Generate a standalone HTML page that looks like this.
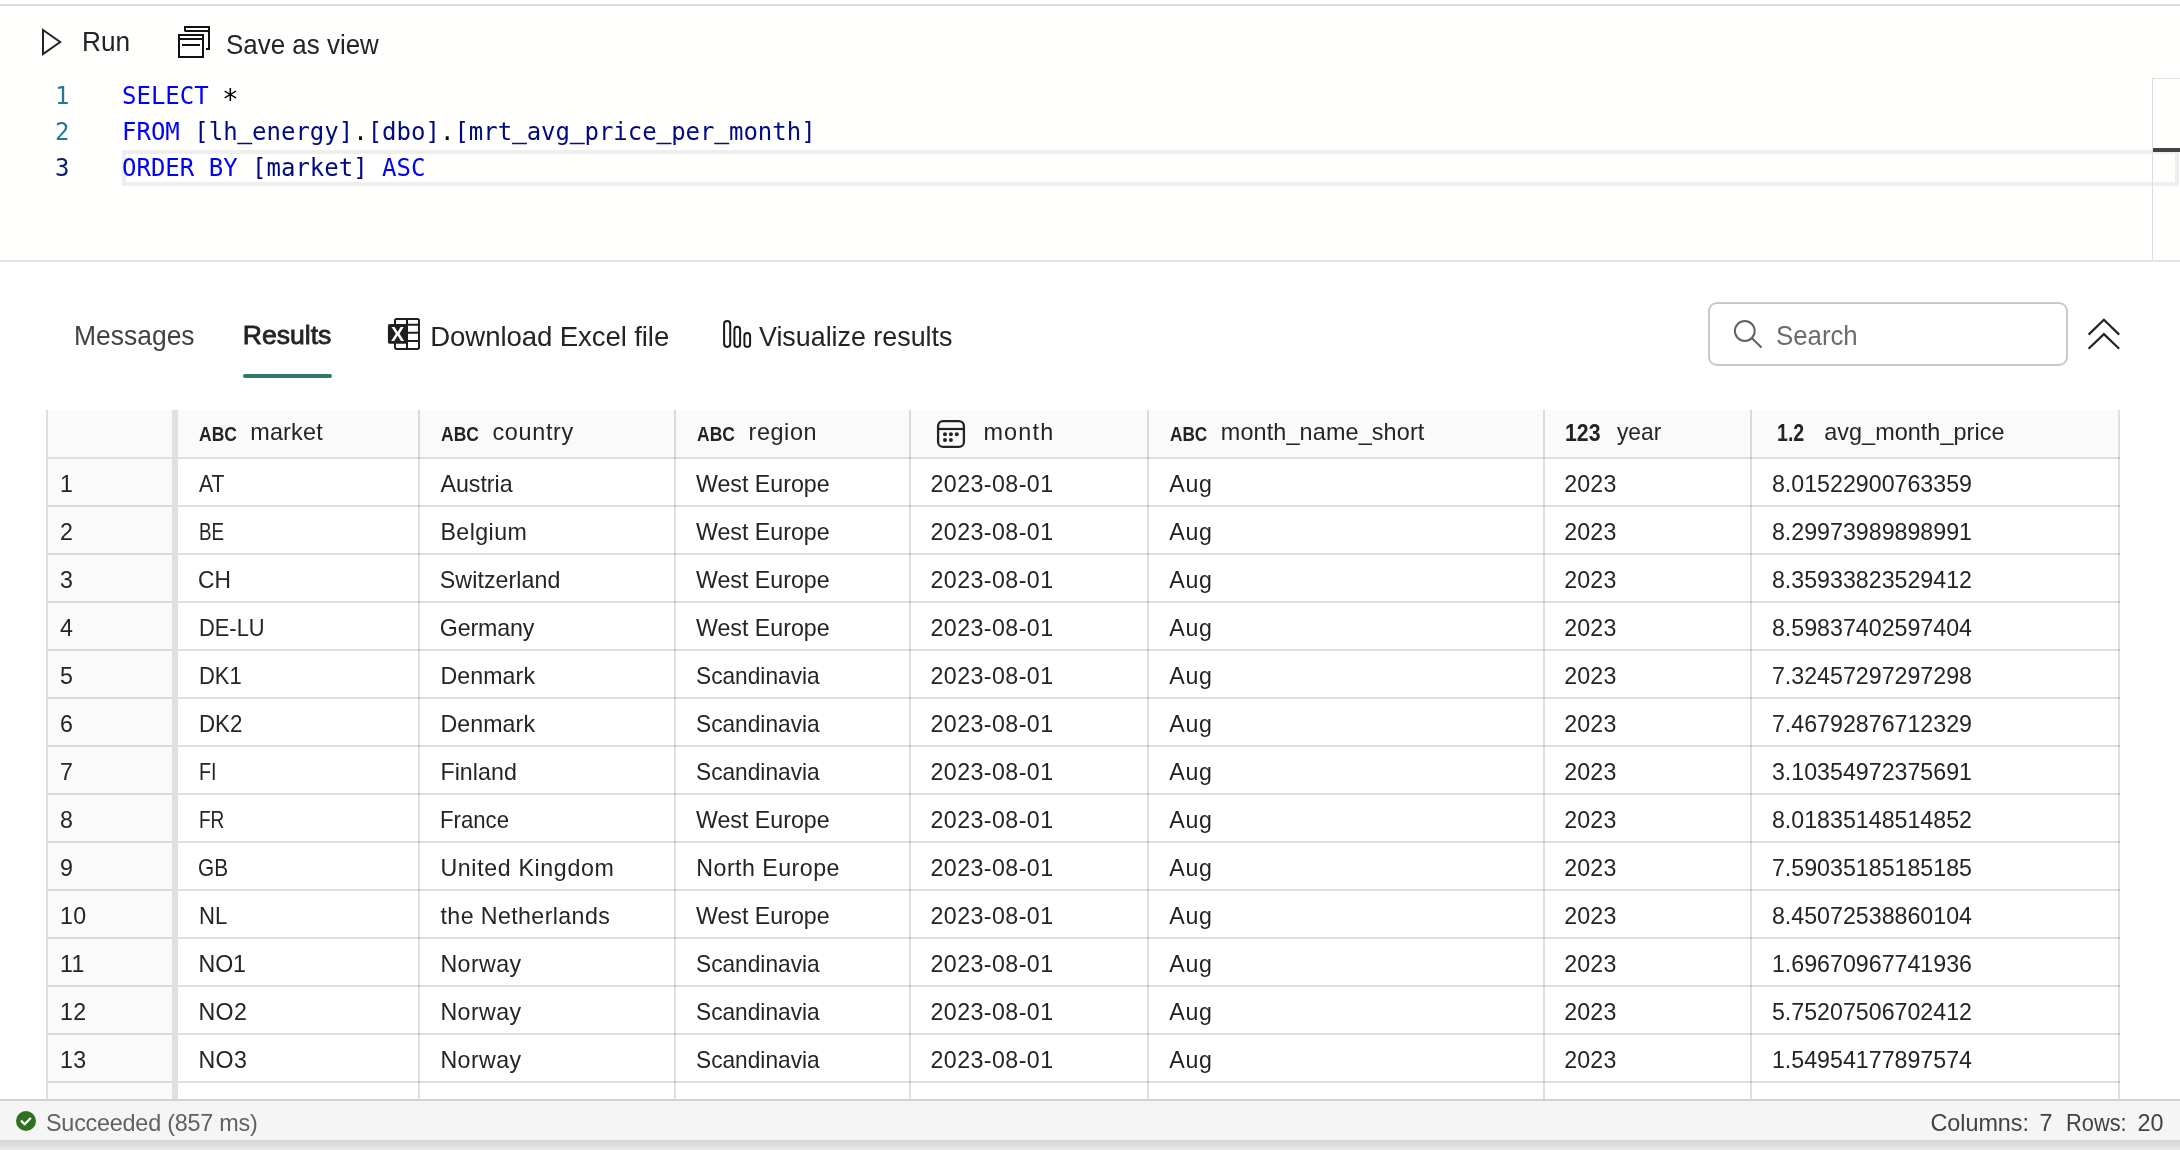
<!DOCTYPE html>
<html lang="en">
<head>
<meta charset="utf-8">
<title>SQL query results</title>
<style>
html,body{margin:0;padding:0}
body{width:2180px;height:1150px;overflow:hidden;background:#fff;position:relative;font-family:"Liberation Sans",sans-serif;color:#242424}
.abs{position:absolute}
.t{position:absolute;white-space:pre;line-height:1;transform-origin:0 50%;font-family:"Liberation Sans",sans-serif}
.code,.ln{position:absolute;white-space:pre;line-height:1;font-family:"DejaVu Sans Mono","Liberation Mono",monospace;font-size:24px}
.code{left:122px}
.u{display:inline-block;transform:translateY(-2.5px);-webkit-text-stroke:0.5px currentColor}
.ast{display:inline-block;color:#000;transform:translateY(4px) scale(1.15)}
.ln{left:40px;width:29.5px;text-align:right}
#topline{left:0;top:4px;width:2180px;height:2px;background:#dcdcdc}
#editor{left:0;top:6px;width:2180px;height:254px;background:#fffffe}
#edsep{left:0;top:260px;width:2180px;height:2px;background:#e4e4e4}
#curline{left:122px;top:150px;width:2049px;height:28px;border:4px solid #eeeeee}
#ruler{left:2152px;top:78px;width:28px;height:182px;border-left:1px solid #dddddd;border-top:1px solid #e2e2e2;box-sizing:border-box}
#rulermark{left:2153px;top:148px;width:27px;height:4px;background:#444444}
#tabline{left:243px;top:374px;width:89px;height:4px;border-radius:2px;background:#2f7a6a}
#search{left:1708px;top:302px;width:360px;height:64px;box-sizing:border-box;border:2px solid #c9c9c9;border-radius:9px;background:#fff}
/* table */
#thead{left:48px;top:410px;width:2070px;height:47px;background:#fafafa}
#rownum{left:48px;top:459px;width:124px;height:641px;background:#fafafa}
.hl{position:absolute;left:46px;width:2074px;height:2px;background:rgba(0,0,0,.125)}
.vl{position:absolute;top:410px;width:2px;height:690px;background:rgba(0,0,0,.125)}
#divider{left:172px;top:410px;width:6px;height:690px;background:#e0e0e0}
#clip{left:0;top:0;width:2180px;height:1150px;will-change:transform}
#st{left:0;top:0;width:2180px;height:1150px;will-change:transform}
/* status */
#status{left:0;top:1099px;width:2180px;height:41px;background:#f5f5f5;border-top:2px solid #d1d1d1;box-sizing:border-box}
#shadow{left:0;top:1140px;width:2180px;height:10px;background:linear-gradient(#d4d4d4,#e9e9e9)}
</style>
</head>
<body>
<div class="abs" id="clip">
<div class="abs" id="topline"></div>
<div class="abs" id="editor"></div>
<div class="abs" id="edsep"></div>
<div class="abs" id="curline"></div>
<div class="abs" id="ruler"></div>
<div class="abs" id="rulermark"></div>

<!-- toolbar icons -->
<svg class="abs" style="left:40px;top:26px" width="24" height="32" viewBox="0 0 24 32"><path d="M3 4 L20.2 16 L3 28 Z" fill="none" stroke="#242424" stroke-width="2" stroke-linejoin="miter"/></svg>
<svg class="abs" style="left:176px;top:24px" width="36" height="36" viewBox="0 0 36 36" fill="none" stroke="#111" stroke-width="2"><path d="M9 7.5 V3 H33 V25 H30"/><path d="M9 7 H33" stroke-width="2"/><rect x="3" y="11" width="24" height="22"/><path d="M3 15 H27"/><path d="M6 21 H24"/></svg>

<!-- results toolbar icons -->
<div class="abs" id="tabline"></div>
<div class="abs" id="search"></div>

<!-- table -->
<div class="abs" id="thead"></div>
<div class="abs" id="rownum"></div>
<div class="hl" style="top:457px"></div>
<div class="hl" style="top:505px"></div>
<div class="hl" style="top:553px"></div>
<div class="hl" style="top:601px"></div>
<div class="hl" style="top:649px"></div>
<div class="hl" style="top:697px"></div>
<div class="hl" style="top:745px"></div>
<div class="hl" style="top:793px"></div>
<div class="hl" style="top:841px"></div>
<div class="hl" style="top:889px"></div>
<div class="hl" style="top:937px"></div>
<div class="hl" style="top:985px"></div>
<div class="hl" style="top:1033px"></div>
<div class="hl" style="top:1081px"></div>
<div class="vl" style="left:418px"></div>
<div class="vl" style="left:674px"></div>
<div class="vl" style="left:909px"></div>
<div class="vl" style="left:1147px"></div>
<div class="vl" style="left:1543px"></div>
<div class="vl" style="left:1750px"></div>
<div class="vl" style="left:2118px"></div>
<div class="vl" style="left:46px;background:#dfdfdf"></div>
<div class="abs" id="divider"></div>
<!-- excel icon -->
<svg class="abs" style="left:386px;top:316px" width="36" height="36" viewBox="0 0 36 36"><g fill="none" stroke="#1f1f1f" stroke-width="2"><rect x="9" y="2.9" width="24" height="30" rx="1.6"/><path d="M21 2.9V32.9M21 8.7H33M21 16.8H33M21 25H33"/></g><rect x="1.9" y="8" width="19.4" height="19.8" rx="1.8" fill="#1f1f1f"/><text x="11.65" y="25.05" font-family="Liberation Sans, sans-serif" font-weight="700" font-size="19.8" fill="#ffffff" text-anchor="middle">X</text></svg>
<!-- visualize icon -->
<svg class="abs" style="left:722px;top:318px" width="32" height="32" viewBox="0 0 32 32" fill="none" stroke="#1a1a1a" stroke-width="2"><rect x="2.1" y="2.9" width="6.1" height="26" rx="3.05"/><rect x="12.4" y="8.7" width="5.7" height="20.2" rx="2.85"/><rect x="22.4" y="15.1" width="5.7" height="13.8" rx="2.85"/></svg>
<!-- search icon -->
<svg class="abs" style="left:1730px;top:316px" width="36" height="36" viewBox="0 0 36 36" fill="none" stroke="#616161" stroke-width="2" stroke-linecap="round"><circle cx="14.8" cy="15" r="9.9"/><path d="M22 22.3L31 31"/></svg>
<!-- collapse chevrons -->
<svg class="abs" style="left:2084px;top:313.4px" width="40" height="40" viewBox="0 0 40 40" fill="none" stroke="#242424" stroke-width="2.2"><path d="M4.6 21.6L19.9 6.8L35.2 21.6"/><path d="M4.6 35.8L19.9 21.1L35.2 35.8"/></svg>
<!-- calendar icon -->
<svg class="abs" style="left:935px;top:418px" width="32" height="32" viewBox="0 0 32 32"><rect x="3.1" y="3.1" width="25.8" height="25.8" rx="5" fill="none" stroke="#242424" stroke-width="2.3"/><path d="M3 11H29" stroke="#242424" stroke-width="2.2"/><g fill="#242424"><circle cx="10" cy="16.2" r="2"/><circle cx="15.9" cy="16.2" r="2"/><circle cx="21.8" cy="16.2" r="2"/><circle cx="10" cy="22.1" r="2"/><circle cx="15.9" cy="22.1" r="2"/></g></svg>

<div class="code" style="top:84.00px"><span style="color:#0000ff">SELECT</span><span style="color:#000000"> </span><span class="ast">*</span></div>
<div class="ln" style="top:84.00px;color:#237893">1</div>
<div class="code" style="top:120.00px"><span style="color:#0000ff">FROM</span><span style="color:#000000"> </span><span style="color:#000a80">[lh<span class="u">_</span>energy]</span><span style="color:#000000">.</span><span style="color:#000a80">[dbo]</span><span style="color:#000000">.</span><span style="color:#000a80">[mrt<span class="u">_</span>avg<span class="u">_</span>price<span class="u">_</span>per<span class="u">_</span>month]</span></div>
<div class="ln" style="top:120.00px;color:#237893">2</div>
<div class="code" style="top:156.00px"><span style="color:#0000ff">ORDER</span><span style="color:#000000"> </span><span style="color:#0000ff">BY</span><span style="color:#000000"> </span><span style="color:#000a80">[market]</span><span style="color:#000000"> </span><span style="color:#0000ff">ASC</span></div>
<div class="ln" style="top:156.00px;color:#0b216f">3</div>
<span class="t" style="left:82.19px;top:28.00px;font-size:27.4px;transform:scaleX(0.9572)">Run</span>
<span class="t" style="left:226.35px;top:31.00px;font-size:27.4px;transform:scaleX(0.9471)">Save as view</span>
<span class="t" style="left:73.87px;top:321.60px;font-size:27.4px;color:#424242;transform:scaleX(0.9661)">Messages</span>
<span class="t" style="left:242.80px;top:322.00px;font-size:26.6px;letter-spacing:-0.030px;-webkit-text-stroke:0.8px #242424">Results</span>
<span class="t" style="left:430.30px;top:322.90px;font-size:27.6px;letter-spacing:-0.103px">Download Excel file</span>
<span class="t" style="left:758.50px;top:322.90px;font-size:27.6px;transform:scaleX(0.9724)">Visualize results</span>
<span class="t" style="left:1776.06px;top:321.90px;font-size:27.4px;color:#6b6b6b;transform:scaleX(0.9414)">Search</span>
<span class="t" style="left:250.20px;top:421.40px;font-size:23.4px;letter-spacing:0.203px">market</span>
<span class="t" style="left:492.50px;top:421.40px;font-size:23.4px;letter-spacing:0.665px">country</span>
<span class="t" style="left:748.50px;top:421.40px;font-size:23.4px;letter-spacing:0.598px">region</span>
<span class="t" style="left:983.40px;top:421.40px;font-size:23.4px;letter-spacing:1.200px">month</span>
<span class="t" style="left:1220.80px;top:421.40px;font-size:23.4px;letter-spacing:0.131px">month_name_short</span>
<span class="t" style="left:1616.60px;top:421.40px;font-size:23.4px;transform:scaleX(0.9713)">year</span>
<span class="t" style="left:1824.20px;top:421.40px;font-size:23.4px;letter-spacing:0.055px">avg_month_price</span>
<span class="t" style="left:199.00px;top:424.40px;font-size:20.6px;font-weight:700;transform:scaleX(0.8493)">ABC</span>
<span class="t" style="left:441.20px;top:424.40px;font-size:20.6px;font-weight:700;transform:scaleX(0.8493)">ABC</span>
<span class="t" style="left:697.20px;top:424.40px;font-size:20.6px;font-weight:700;transform:scaleX(0.8493)">ABC</span>
<span class="t" style="left:1170.30px;top:424.40px;font-size:20.6px;font-weight:700;transform:scaleX(0.8359)">ABC</span>
<span class="t" style="left:1565.08px;top:421.90px;font-size:23.0px;font-weight:700;transform:scaleX(0.9239)">123</span>
<span class="t" style="left:1777.15px;top:421.90px;font-size:23.0px;font-weight:700;transform:scaleX(0.8515)">1.2</span>
<span class="t" style="left:60.00px;top:473.00px;font-size:23.2px;letter-spacing:0.304px">1</span>
<span class="t" style="left:198.50px;top:473.00px;font-size:23.2px;transform:scaleX(0.9119)">AT</span>
<span class="t" style="left:440.50px;top:473.00px;font-size:23.2px;letter-spacing:-0.012px">Austria</span>
<span class="t" style="left:696.00px;top:473.00px;font-size:23.2px;letter-spacing:-0.002px">West Europe</span>
<span class="t" style="left:930.50px;top:473.00px;font-size:23.2px;letter-spacing:0.443px">2023-08-01</span>
<span class="t" style="left:1169.30px;top:473.00px;font-size:23.2px;letter-spacing:0.619px">Aug</span>
<span class="t" style="left:1564.30px;top:473.00px;font-size:23.2px;letter-spacing:0.138px">2023</span>
<span class="t" style="left:1771.90px;top:473.00px;font-size:23.2px;letter-spacing:0.014px">8.01522900763359</span>
<span class="t" style="left:60.00px;top:521.00px;font-size:23.2px;letter-spacing:0.304px">2</span>
<span class="t" style="left:198.69px;top:521.00px;font-size:23.2px;transform:scaleX(0.8111)">BE</span>
<span class="t" style="left:440.40px;top:521.00px;font-size:23.2px;letter-spacing:0.441px">Belgium</span>
<span class="t" style="left:696.00px;top:521.00px;font-size:23.2px;letter-spacing:-0.002px">West Europe</span>
<span class="t" style="left:930.50px;top:521.00px;font-size:23.2px;letter-spacing:0.443px">2023-08-01</span>
<span class="t" style="left:1169.30px;top:521.00px;font-size:23.2px;letter-spacing:0.619px">Aug</span>
<span class="t" style="left:1564.30px;top:521.00px;font-size:23.2px;letter-spacing:0.138px">2023</span>
<span class="t" style="left:1771.90px;top:521.00px;font-size:23.2px;letter-spacing:0.014px">8.29973989898991</span>
<span class="t" style="left:60.00px;top:569.00px;font-size:23.2px;letter-spacing:0.304px">3</span>
<span class="t" style="left:198.02px;top:569.00px;font-size:23.2px;transform:scaleX(0.9823)">CH</span>
<span class="t" style="left:439.80px;top:569.00px;font-size:23.2px;letter-spacing:0.074px">Switzerland</span>
<span class="t" style="left:696.00px;top:569.00px;font-size:23.2px;letter-spacing:-0.002px">West Europe</span>
<span class="t" style="left:930.50px;top:569.00px;font-size:23.2px;letter-spacing:0.443px">2023-08-01</span>
<span class="t" style="left:1169.30px;top:569.00px;font-size:23.2px;letter-spacing:0.619px">Aug</span>
<span class="t" style="left:1564.30px;top:569.00px;font-size:23.2px;letter-spacing:0.138px">2023</span>
<span class="t" style="left:1771.90px;top:569.00px;font-size:23.2px;letter-spacing:0.014px">8.35933823529412</span>
<span class="t" style="left:60.00px;top:617.00px;font-size:23.2px;letter-spacing:0.304px">4</span>
<span class="t" style="left:198.56px;top:617.00px;font-size:23.2px;transform:scaleX(0.9427)">DE-LU</span>
<span class="t" style="left:439.80px;top:617.00px;font-size:23.2px;letter-spacing:-0.143px">Germany</span>
<span class="t" style="left:696.00px;top:617.00px;font-size:23.2px;letter-spacing:-0.002px">West Europe</span>
<span class="t" style="left:930.50px;top:617.00px;font-size:23.2px;letter-spacing:0.443px">2023-08-01</span>
<span class="t" style="left:1169.30px;top:617.00px;font-size:23.2px;letter-spacing:0.619px">Aug</span>
<span class="t" style="left:1564.30px;top:617.00px;font-size:23.2px;letter-spacing:0.138px">2023</span>
<span class="t" style="left:1771.90px;top:617.00px;font-size:23.2px;letter-spacing:0.014px">8.59837402597404</span>
<span class="t" style="left:60.00px;top:665.00px;font-size:23.2px;letter-spacing:0.304px">5</span>
<span class="t" style="left:198.55px;top:665.00px;font-size:23.2px;transform:scaleX(0.9465)">DK1</span>
<span class="t" style="left:440.40px;top:665.00px;font-size:23.2px;letter-spacing:0.088px">Denmark</span>
<span class="t" style="left:695.72px;top:665.00px;font-size:23.2px;transform:scaleX(0.9790)">Scandinavia</span>
<span class="t" style="left:930.50px;top:665.00px;font-size:23.2px;letter-spacing:0.443px">2023-08-01</span>
<span class="t" style="left:1169.30px;top:665.00px;font-size:23.2px;letter-spacing:0.619px">Aug</span>
<span class="t" style="left:1564.30px;top:665.00px;font-size:23.2px;letter-spacing:0.138px">2023</span>
<span class="t" style="left:1771.90px;top:665.00px;font-size:23.2px;letter-spacing:0.014px">7.32457297297298</span>
<span class="t" style="left:60.00px;top:713.00px;font-size:23.2px;letter-spacing:0.304px">6</span>
<span class="t" style="left:198.54px;top:713.00px;font-size:23.2px;transform:scaleX(0.9627)">DK2</span>
<span class="t" style="left:440.40px;top:713.00px;font-size:23.2px;letter-spacing:0.088px">Denmark</span>
<span class="t" style="left:695.72px;top:713.00px;font-size:23.2px;transform:scaleX(0.9790)">Scandinavia</span>
<span class="t" style="left:930.50px;top:713.00px;font-size:23.2px;letter-spacing:0.443px">2023-08-01</span>
<span class="t" style="left:1169.30px;top:713.00px;font-size:23.2px;letter-spacing:0.619px">Aug</span>
<span class="t" style="left:1564.30px;top:713.00px;font-size:23.2px;letter-spacing:0.138px">2023</span>
<span class="t" style="left:1771.90px;top:713.00px;font-size:23.2px;letter-spacing:0.014px">7.46792876712329</span>
<span class="t" style="left:60.00px;top:761.00px;font-size:23.2px;letter-spacing:0.304px">7</span>
<span class="t" style="left:198.65px;top:761.00px;font-size:23.2px;transform:scaleX(0.8533)">FI</span>
<span class="t" style="left:440.40px;top:761.00px;font-size:23.2px;letter-spacing:0.074px">Finland</span>
<span class="t" style="left:695.72px;top:761.00px;font-size:23.2px;transform:scaleX(0.9790)">Scandinavia</span>
<span class="t" style="left:930.50px;top:761.00px;font-size:23.2px;letter-spacing:0.443px">2023-08-01</span>
<span class="t" style="left:1169.30px;top:761.00px;font-size:23.2px;letter-spacing:0.619px">Aug</span>
<span class="t" style="left:1564.30px;top:761.00px;font-size:23.2px;letter-spacing:0.138px">2023</span>
<span class="t" style="left:1771.90px;top:761.00px;font-size:23.2px;letter-spacing:0.014px">3.10354972375691</span>
<span class="t" style="left:60.00px;top:809.00px;font-size:23.2px;letter-spacing:0.304px">8</span>
<span class="t" style="left:198.68px;top:809.00px;font-size:23.2px;transform:scaleX(0.8195)">FR</span>
<span class="t" style="left:440.44px;top:809.00px;font-size:23.2px;transform:scaleX(0.9563)">France</span>
<span class="t" style="left:696.00px;top:809.00px;font-size:23.2px;letter-spacing:-0.002px">West Europe</span>
<span class="t" style="left:930.50px;top:809.00px;font-size:23.2px;letter-spacing:0.443px">2023-08-01</span>
<span class="t" style="left:1169.30px;top:809.00px;font-size:23.2px;letter-spacing:0.619px">Aug</span>
<span class="t" style="left:1564.30px;top:809.00px;font-size:23.2px;letter-spacing:0.138px">2023</span>
<span class="t" style="left:1771.90px;top:809.00px;font-size:23.2px;letter-spacing:0.014px">8.01835148514852</span>
<span class="t" style="left:60.00px;top:857.00px;font-size:23.2px;letter-spacing:0.304px">9</span>
<span class="t" style="left:198.10px;top:857.00px;font-size:23.2px;transform:scaleX(0.8959)">GB</span>
<span class="t" style="left:440.40px;top:857.00px;font-size:23.2px;letter-spacing:0.649px">United Kingdom</span>
<span class="t" style="left:696.30px;top:857.00px;font-size:23.2px;letter-spacing:0.471px">North Europe</span>
<span class="t" style="left:930.50px;top:857.00px;font-size:23.2px;letter-spacing:0.443px">2023-08-01</span>
<span class="t" style="left:1169.30px;top:857.00px;font-size:23.2px;letter-spacing:0.619px">Aug</span>
<span class="t" style="left:1564.30px;top:857.00px;font-size:23.2px;letter-spacing:0.138px">2023</span>
<span class="t" style="left:1771.90px;top:857.00px;font-size:23.2px;letter-spacing:0.014px">7.59035185185185</span>
<span class="t" style="left:60.00px;top:905.00px;font-size:23.2px;letter-spacing:0.304px">10</span>
<span class="t" style="left:198.55px;top:905.00px;font-size:23.2px;transform:scaleX(0.9532)">NL</span>
<span class="t" style="left:440.50px;top:905.00px;font-size:23.2px;letter-spacing:0.399px">the Netherlands</span>
<span class="t" style="left:696.00px;top:905.00px;font-size:23.2px;letter-spacing:-0.002px">West Europe</span>
<span class="t" style="left:930.50px;top:905.00px;font-size:23.2px;letter-spacing:0.443px">2023-08-01</span>
<span class="t" style="left:1169.30px;top:905.00px;font-size:23.2px;letter-spacing:0.619px">Aug</span>
<span class="t" style="left:1564.30px;top:905.00px;font-size:23.2px;letter-spacing:0.138px">2023</span>
<span class="t" style="left:1771.90px;top:905.00px;font-size:23.2px;letter-spacing:0.014px">8.45072538860104</span>
<span class="t" style="left:60.00px;top:953.00px;font-size:23.2px;letter-spacing:0.304px">11</span>
<span class="t" style="left:198.50px;top:953.00px;font-size:23.2px;letter-spacing:-0.091px">NO1</span>
<span class="t" style="left:440.40px;top:953.00px;font-size:23.2px;letter-spacing:0.439px">Norway</span>
<span class="t" style="left:695.72px;top:953.00px;font-size:23.2px;transform:scaleX(0.9790)">Scandinavia</span>
<span class="t" style="left:930.50px;top:953.00px;font-size:23.2px;letter-spacing:0.443px">2023-08-01</span>
<span class="t" style="left:1169.30px;top:953.00px;font-size:23.2px;letter-spacing:0.619px">Aug</span>
<span class="t" style="left:1564.30px;top:953.00px;font-size:23.2px;letter-spacing:0.138px">2023</span>
<span class="t" style="left:1771.90px;top:953.00px;font-size:23.2px;letter-spacing:0.014px">1.69670967741936</span>
<span class="t" style="left:60.00px;top:1001.00px;font-size:23.2px;letter-spacing:0.304px">12</span>
<span class="t" style="left:198.50px;top:1001.00px;font-size:23.2px;letter-spacing:0.309px">NO2</span>
<span class="t" style="left:440.40px;top:1001.00px;font-size:23.2px;letter-spacing:0.439px">Norway</span>
<span class="t" style="left:695.72px;top:1001.00px;font-size:23.2px;transform:scaleX(0.9790)">Scandinavia</span>
<span class="t" style="left:930.50px;top:1001.00px;font-size:23.2px;letter-spacing:0.443px">2023-08-01</span>
<span class="t" style="left:1169.30px;top:1001.00px;font-size:23.2px;letter-spacing:0.619px">Aug</span>
<span class="t" style="left:1564.30px;top:1001.00px;font-size:23.2px;letter-spacing:0.138px">2023</span>
<span class="t" style="left:1771.90px;top:1001.00px;font-size:23.2px;letter-spacing:0.014px">5.75207506702412</span>
<span class="t" style="left:60.00px;top:1049.00px;font-size:23.2px;letter-spacing:0.304px">13</span>
<span class="t" style="left:198.50px;top:1049.00px;font-size:23.2px;letter-spacing:0.309px">NO3</span>
<span class="t" style="left:440.40px;top:1049.00px;font-size:23.2px;letter-spacing:0.439px">Norway</span>
<span class="t" style="left:695.72px;top:1049.00px;font-size:23.2px;transform:scaleX(0.9790)">Scandinavia</span>
<span class="t" style="left:930.50px;top:1049.00px;font-size:23.2px;letter-spacing:0.443px">2023-08-01</span>
<span class="t" style="left:1169.30px;top:1049.00px;font-size:23.2px;letter-spacing:0.619px">Aug</span>
<span class="t" style="left:1564.30px;top:1049.00px;font-size:23.2px;letter-spacing:0.138px">2023</span>
<span class="t" style="left:1771.90px;top:1049.00px;font-size:23.2px;letter-spacing:0.014px">1.54954177897574</span>
<span class="t" style="left:60.00px;top:1097.00px;font-size:23.2px;letter-spacing:0.304px">14</span>
<span class="t" style="left:198.50px;top:1097.00px;font-size:23.2px;letter-spacing:0.009px">NO4</span>
<span class="t" style="left:440.40px;top:1097.00px;font-size:23.2px;letter-spacing:0.439px">Norway</span>
<span class="t" style="left:695.72px;top:1097.00px;font-size:23.2px;transform:scaleX(0.9790)">Scandinavia</span>
<span class="t" style="left:930.50px;top:1097.00px;font-size:23.2px;letter-spacing:0.443px">2023-08-01</span>
<span class="t" style="left:1169.30px;top:1097.00px;font-size:23.2px;letter-spacing:0.619px">Aug</span>
<span class="t" style="left:1564.30px;top:1097.00px;font-size:23.2px;letter-spacing:0.138px">2023</span>
<span class="t" style="left:1771.90px;top:1097.00px;font-size:23.2px;letter-spacing:0.014px">1.38641509433962</span>
</div>
<div class="abs" id="st">
<div class="abs" id="status"></div>
<div class="abs" id="shadow"></div>
<svg class="abs" style="left:14px;top:1109px" width="24" height="24" viewBox="0 0 24 24"><circle cx="12" cy="12" r="10" fill="#307022"/><path d="M7 11.6L10.6 15.2L16.8 8.9" fill="none" stroke="#fff" stroke-width="2.2"/></svg>

<span class="t" style="left:46.00px;top:1112.00px;font-size:23.4px;letter-spacing:-0.237px;color:#616161">Succeeded (857 ms)</span>
<span class="t" style="left:1930.40px;top:1112.00px;font-size:23.4px;letter-spacing:-0.028px;color:#424242">Columns:</span>
<span class="t" style="left:2039.60px;top:1112.00px;font-size:23.4px;letter-spacing:1.400px;color:#424242">7</span>
<span class="t" style="left:2066.27px;top:1112.00px;font-size:23.4px;color:#424242;transform:scaleX(0.9330)">Rows:</span>
<span class="t" style="left:2137.50px;top:1112.00px;font-size:23.4px;letter-spacing:-0.109px;color:#424242">20</span>
</div>
</body>
</html>
